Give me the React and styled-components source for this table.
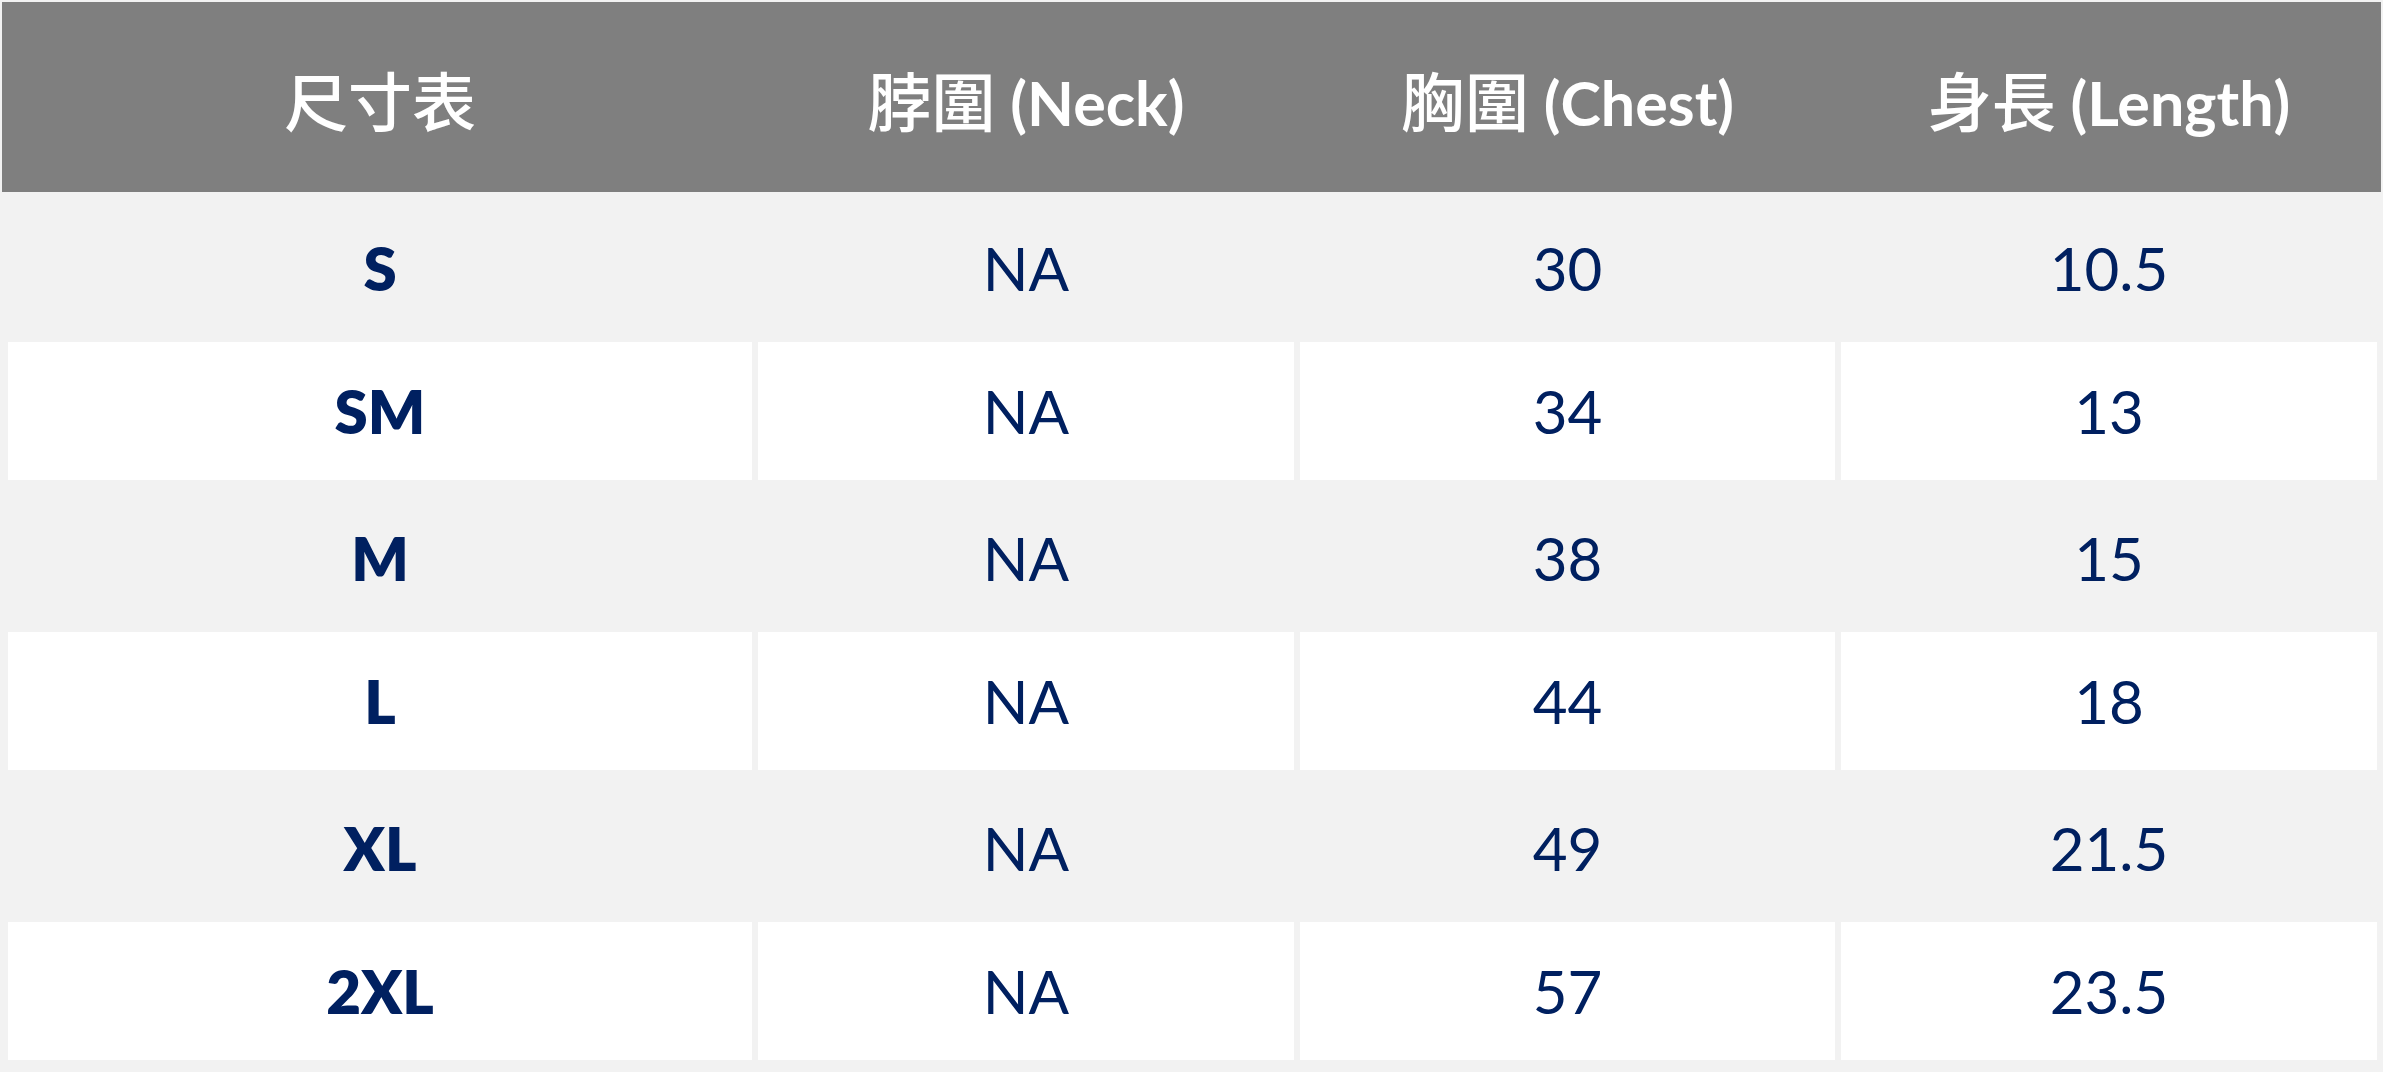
import React from "react";
import styled, { createGlobalStyle } from "styled-components";

const Global = createGlobalStyle`
  html, body {
    margin: 0;
    padding: 0;
    background: #f2f2f2;
  }
  body {
    font-family: "Lato", "Noto Sans CJK TC", sans-serif;
  }
`;

const Sheet = styled.div`
  width: 2383px;
  height: 1072px;
  box-sizing: border-box;
  padding: 2px;
  background: #f2f2f2;
  border-top: 0;
  display: flex;
  flex-direction: column;
`;

const HeaderRow = styled.div`
  height: 190px;
  background: #7f7f7f;
  display: grid;
  grid-template-columns: 744px 536px 535px 536px;
  column-gap: 6px;
  padding: 0 4px 0 6px;
  box-sizing: border-box;
  align-items: center;
`;

const HeadCell = styled.div`
  color: #ffffff;
  font-family: "Lato", "Noto Sans CJK TC", sans-serif;
  font-weight: 700;
  font-size: 61px;
  text-align: center;
  line-height: 1;
  padding-top: 4px;
`;

const Han = styled.span`
  font-family: "Noto Sans CJK TC", sans-serif;
  font-weight: 500;
  font-size: 64px;
`;

const BodyRow = styled.div`
  height: 145px;
  box-sizing: border-box;
  padding: 5px 4px 2px 6px;
  display: grid;
  grid-template-columns: 744px 536px 535px 536px;
  column-gap: 6px;
  background: #f2f2f2;
`;

const Cell = styled.div`
  background: ${(p) => (p.$alt ? "#ffffff" : "#f2f2f2")};
  display: flex;
  align-items: center;
  justify-content: center;
  color: #002060;
  font-family: "Lato", sans-serif;
  font-size: 60px;
  font-weight: ${(p) => (p.$bold ? 800 : 400)};
  line-height: 1;
  padding-top: ${(p) => (p.$alt ? "0" : "4px")};
  box-sizing: border-box;
`;

const rows = [
  ["S", "NA", "30", "10.5"],
  ["SM", "NA", "34", "13"],
  ["M", "NA", "38", "15"],
  ["L", "NA", "44", "18"],
  ["XL", "NA", "49", "21.5"],
  ["2XL", "NA", "57", "23.5"],
];

export default function App() {
  return (
    <>
      <Global />
      <Sheet>
        <HeaderRow>
          <HeadCell>
            <Han>尺寸表</Han>
          </HeadCell>
          <HeadCell>
            <Han>脖圍</Han> (Neck)
          </HeadCell>
          <HeadCell>
            <Han>胸圍</Han> (Chest)
          </HeadCell>
          <HeadCell>
            <Han>身長</Han> (Length)
          </HeadCell>
        </HeaderRow>
        {rows.map((r, i) => (
          <BodyRow key={r[0]}>
            {r.map((v, j) => (
              <Cell key={j} $alt={i % 2 === 1} $bold={j === 0}>
                {v}
              </Cell>
            ))}
          </BodyRow>
        ))}
      </Sheet>
    </>
  );
}
